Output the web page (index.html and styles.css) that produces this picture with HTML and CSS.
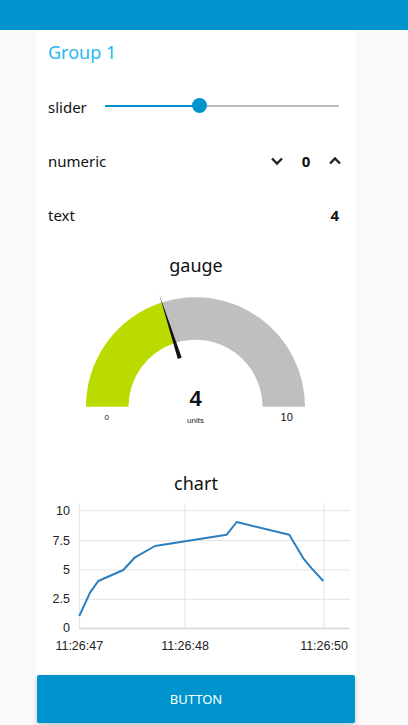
FILE: index.html
```html
<!DOCTYPE html>
<html>
<head>
<meta charset="utf-8">
<link rel="stylesheet" href="styles.css">
</head>
<body>
<header class="topbar"></header>
<main class="card">
  <div class="group-title">Group 1</div>

  <div class="row">
    <span class="label">slider</span>
    <div class="slider">
      <div class="track-fill" style="width:40%"></div>
      <div class="thumb"></div>
      <div class="track-rest"></div>
    </div>
  </div>

  <div class="row">
    <span class="label">numeric</span>
    <div class="numeric">
      <svg class="chev" width="14" height="10" viewBox="0 0 14 10"><path d="M2 2.5 L7 7.5 L12 2.5" fill="none" stroke="#222" stroke-width="2.4"/></svg>
      <span class="num">0</span>
      <svg class="chev" width="14" height="10" viewBox="0 0 14 10"><path d="M2 7.5 L7 2.5 L12 7.5" fill="none" stroke="#222" stroke-width="2.4"/></svg>
    </div>
  </div>

  <div class="row">
    <span class="label">text</span>
    <span class="value">4</span>
  </div>

  <section class="gauge">
    <div class="w-title">gauge</div>
    <svg class="gauge-svg" width="320" height="170" viewBox="0 0 320 170">
      <path d="M125.66 15.56 A109.5 109.5 0 0 1 269 119.7 L226.5 119.7 A67 67 0 0 0 138.8 55.98 Z" fill="#bfbfbf"/>
      <path d="M50 119.7 A109.5 109.5 0 0 1 125.66 15.56 L138.8 55.98 A67 67 0 0 0 92.5 119.7 Z" fill="#bbdb00"/>
      <polygon points="123.3,7.6 145.7,70.6 141.8,71.9" fill="#111"/>
      <text x="159.5" y="119" class="g-val">4</text>
      <text x="159.5" y="136" class="g-units">units</text>
      <text x="70.7" y="133" class="g-min">0</text>
      <text x="250.7" y="134" class="g-max">10</text>
    </svg>
  </section>

  <section class="chart">
    <div class="w-title chart-title">chart</div>
    <svg class="chart-svg" width="320" height="169" viewBox="0 0 320 169">
      <g stroke="#e3e3e3" stroke-width="1">
        <line x1="43.3" y1="10.7" x2="314" y2="10.7"/>
        <line x1="43.3" y1="40.7" x2="314" y2="40.7"/>
        <line x1="43.3" y1="70" x2="314" y2="70"/>
        <line x1="43.3" y1="99.3" x2="314" y2="99.3"/>
        <line x1="43.3" y1="3" x2="43.3" y2="129"/>
        <line x1="149" y1="3" x2="149" y2="129"/>
        <line x1="288" y1="3" x2="288" y2="129"/>
      </g>
      <line x1="43.3" y1="128.5" x2="314" y2="128.5" stroke="#d6d6d6" stroke-width="1.5"/>
      <g class="y-lab">
        <text x="34" y="14.7">10</text>
        <text x="34" y="44.7">7.5</text>
        <text x="34" y="74">5</text>
        <text x="34" y="103.3">2.5</text>
        <text x="34" y="132.3">0</text>
      </g>
      <g class="x-lab">
        <text x="43.3" y="150">11:26:47</text>
        <text x="149" y="150">11:26:48</text>
        <text x="288" y="150">11:26:50</text>
      </g>
      <polyline fill="none" stroke="#2a7fbf" stroke-width="2" stroke-linejoin="round"
        points="43.3,116 54,92.7 62.3,81 87.3,70 99,57.3 119,46 190.7,34.7 200.7,22 253.3,34.7 267.3,58.3 275.7,68.3 287.3,81"/>
    </svg>
  </section>

  <button class="btn">BUTTON</button>
</main>
</body>
</html>
```

FILE: styles.css
```css
html, body {
  margin: 0;
  padding: 0;
}
body {
  background: #fafafa;
  font-family: "Noto Sans", "Open Sans", sans-serif;
  color: #111;
  width: 408px;
  height: 725px;
  overflow: hidden;
}
.topbar {
  height: 30px;
  background: #0094ce;
}
.card {
  width: 320px;
  margin-left: 36px;
  background: #fff;
  display: flex;
  flex-direction: column;
  gap: 6px;
  min-height: 695px;
}
.group-title {
  height: 45px;
  box-sizing: border-box;
  padding: 8px 12px 0;
  font-size: 18px;
  line-height: 28px;
  color: #28b9f2;
}
.row {
  height: 48px;
  padding: 0 12px;
  display: flex;
  align-items: center;
  justify-content: space-between;
}
.label {
  font-size: 15px;
  padding-top: 4px;
}
.slider {
  width: 234px;
  margin-right: 5px;
  margin-top: 1px;
  height: 16px;
  display: flex;
  align-items: center;
  position: relative;
}
.track-fill {
  height: 2px;
  background: #0094ce;
}
.track-rest {
  flex: 1;
  height: 2px;
  background: #bdbdbd;
}
.thumb {
  width: 15px;
  height: 15px;
  border-radius: 50%;
  background: #0094ce;
  margin: 0 -7px;
  position: relative;
  z-index: 1;
}
.numeric {
  display: flex;
  align-items: center;
  margin-right: 2px;
  padding-top: 4px;
}
.chev {
  display: block;
}
.num {
  font-weight: bold;
  font-size: 15px;
  width: 44px;
  text-align: center;
}
.value {
  font-weight: bold;
  font-size: 15px;
  margin-right: 5px;
  padding-top: 4px;
}
.gauge {
  display: flex;
  flex-direction: column;
}
.w-title {
  height: 44px;
  line-height: 44px;
  text-align: center;
  font-size: 18px;
  color: #111;
}
.gauge-svg, .chart-svg {
  display: block;
}
.g-val {
  font-family: "Liberation Sans", Arial, sans-serif;
  font-weight: bold;
  font-size: 22px;
  text-anchor: middle;
  fill: #111;
}
.g-units {
  font-family: "Liberation Sans", Arial, sans-serif;
  font-size: 8px;
  text-anchor: middle;
  fill: #222;
}
.g-min {
  font-family: "Liberation Sans", Arial, sans-serif;
  font-size: 8px;
  text-anchor: middle;
  fill: #111;
}
.g-max {
  font-family: "Liberation Sans", Arial, sans-serif;
  font-size: 11px;
  text-anchor: middle;
  fill: #111;
}
.chart {
  display: flex;
  flex-direction: column;
}
.chart-title {
  height: 37px;
  line-height: 33px;
  padding-top: 4px;
  box-sizing: border-box;
}
.y-lab text {
  font-family: "Liberation Sans", Arial, sans-serif;
  font-size: 12.5px;
  text-anchor: end;
  fill: #222;
}
.x-lab text {
  font-family: "Liberation Sans", Arial, sans-serif;
  font-size: 12.5px;
  text-anchor: middle;
  fill: #222;
}
.btn {
  margin: 0 1px;
  height: 48px;
  border: none;
  border-radius: 2px;
  background: #0094ce;
  color: #fff;
  font-family: "Noto Sans", "Open Sans", sans-serif;
  font-size: 13px;
  box-shadow: 0 2px 5px rgba(0,0,0,0.26);
  padding: 0;
}
```
